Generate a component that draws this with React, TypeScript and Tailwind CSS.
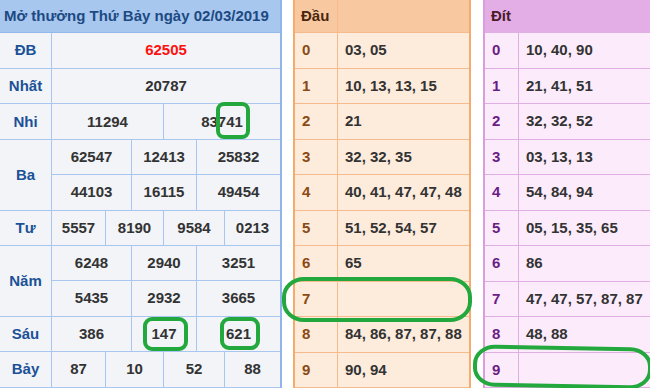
import React from "react";

const font = { fontFamily: '"Liberation Sans", Arial, sans-serif' };

interface Row {
  label: string;
  lines: string[][];
  widths: number[];
  red?: boolean;
}

const W2 = [112, 116];
const W3 = [80, 65, 83];
const W4 = [54, 58, 61, 55];

const rows: Row[] = [
  { label: "ĐB", lines: [["62505"]], widths: [228], red: true },
  { label: "Nhất", lines: [["20787"]], widths: [228] },
  { label: "Nhi", lines: [["11294", "83741"]], widths: W2 },
  { label: "Ba", lines: [["62547", "12413", "25832"], ["44103", "16115", "49454"]], widths: W3 },
  { label: "Tư", lines: [["5557", "8190", "9584", "0213"]], widths: W4 },
  { label: "Năm", lines: [["6248", "2940", "3251"], ["5435", "2932", "3665"]], widths: W3 },
  { label: "Sáu", lines: [["386", "147", "621"]], widths: W3 },
  { label: "Bảy", lines: [["87", "10", "52", "88"]], widths: W4 },
];

const dau = ["03, 05", "10, 13, 13, 15", "21", "32, 32, 35", "40, 41, 47, 47, 48", "51, 52, 54, 57", "65", "", "84, 86, 87, 87, 88", "90, 94"];
const dit = ["10, 40, 90", "21, 41, 51", "32, 32, 52", "03, 13, 13", "54, 84, 94", "05, 15, 35, 65", "86", "47, 47, 57, 87, 87", "48, 88", ""];

const ResultTable = () => (
  <div className="flex flex-col w-[282px] shrink-0 h-[388px] border-r-2 border-[#8fb5ec] bg-[#f2f4f8]">
    <div className="h-[33px] shrink-0 flex items-center pl-[4px] bg-[#a7c7ef] border-b border-[#93b8ec] text-[15px] font-bold text-[#1d4a82] whitespace-nowrap">
      Mở thưởng Thứ Bảy ngày 02/03/2019
    </div>
    {rows.map((r, i) => (
      <div
        key={r.label}
        className={`flex border-b border-[#a9c6f1] ${r.lines.length === 2 ? "flex-[2]" : "flex-1"}`}
      >
        <div className="w-[52px] shrink-0 flex items-center justify-center border-r border-[#a9c6f1] font-bold text-[15px] text-[#1b5196]">
          {r.label}
        </div>
        <div className="flex flex-col flex-1">
          {r.lines.map((line, j) => (
            <div key={j} className={`flex flex-1 ${j === 0 && r.lines.length === 2 ? "border-b border-[#a9c6f1]" : ""}`}>
              {line.map((v, k) => (
                <div
                  key={k}
                  style={{ width: r.widths[k] }}
                  className={`flex items-center justify-center font-bold text-[15px] ${k < line.length - 1 ? "border-r border-[#a9c6f1]" : ""} ${r.red ? "text-[#ff1010]" : "text-[#333]"}`}
                >
                  {v}
                </div>
              ))}
            </div>
          ))}
        </div>
      </div>
    ))}
  </div>
);

interface LotoProps {
  title: string;
  values: string[];
  labelW: number;
  width: number;
  headBg: string;
  bodyBg: string;
  border: string;
  outer: string;
  titleColor: string;
  labelColor: string;
}

const LotoTable = ({ title, values, labelW, width, headBg, bodyBg, border, outer, titleColor, labelColor }: LotoProps) => (
  <div className={`flex flex-col shrink-0 h-[388px] border-x-2 ${outer} ${bodyBg}`} style={{ width }}>
    <div className={`h-[33px] shrink-0 flex ${headBg} border-b ${border}`}>
      <div className={`flex items-center pl-[6px] border-r ${border} font-bold text-[15px] ${titleColor}`} style={{ width: labelW }}>
        {title}
      </div>
    </div>
    {values.map((v, i) => (
      <div key={i} className={`flex flex-1 border-b ${border}`}>
        <div className={`flex items-center pl-[7px] border-r ${border} font-bold text-[15px] ${labelColor}`} style={{ width: labelW }}>
          {i}
        </div>
        <div className="flex items-center pl-[7px] font-bold text-[15px] text-[#333] whitespace-nowrap">{v}</div>
      </div>
    ))}
  </div>
);

const Marks = () => (
  <svg className="absolute inset-0 pointer-events-none" width="650" height="388">
    <g fill="none" stroke="#22a83c" strokeWidth="4">
      <rect x="218" y="104" width="30" height="33" rx="6" />
      <rect x="145" y="319" width="41" height="30" rx="7" />
      <rect x="222" y="319" width="36" height="29" rx="7" />
      <rect x="284" y="279" width="186" height="41" rx="20" ry="18" />
      <rect x="475" y="348" width="175" height="38" rx="20" ry="17" transform="rotate(1 562 367)" />
    </g>
  </svg>
);

export default function App() {
  return (
    <div className="relative w-[650px] h-[388px] overflow-hidden bg-white flex" style={font}>
      <ResultTable />
      <div className="w-[11px] shrink-0" />
      <LotoTable
        title="Đầu"
        values={dau}
        labelW={43}
        width={178}
        headBg="bg-[#f8c9a1]"
        bodyBg="bg-[#fdebdc]"
        border="border-[#f6bb8c]"
        outer="border-[#f5ab6e]"
        titleColor="text-[#4a260e]"
        labelColor="text-[#8b4a14]"
      />
      <div className="w-[12px] shrink-0" />
      <LotoTable
        title="Đít"
        values={dit}
        labelW={34}
        width={180}
        headBg="bg-[#e3aee6]"
        bodyBg="bg-[#fcecfb]"
        border="border-[#dfaee3]"
        outer="border-[#d99ede]"
        titleColor="text-[#4a1c28]"
        labelColor="text-[#6b1d86]"
      />
      <Marks />
    </div>
  );
}
